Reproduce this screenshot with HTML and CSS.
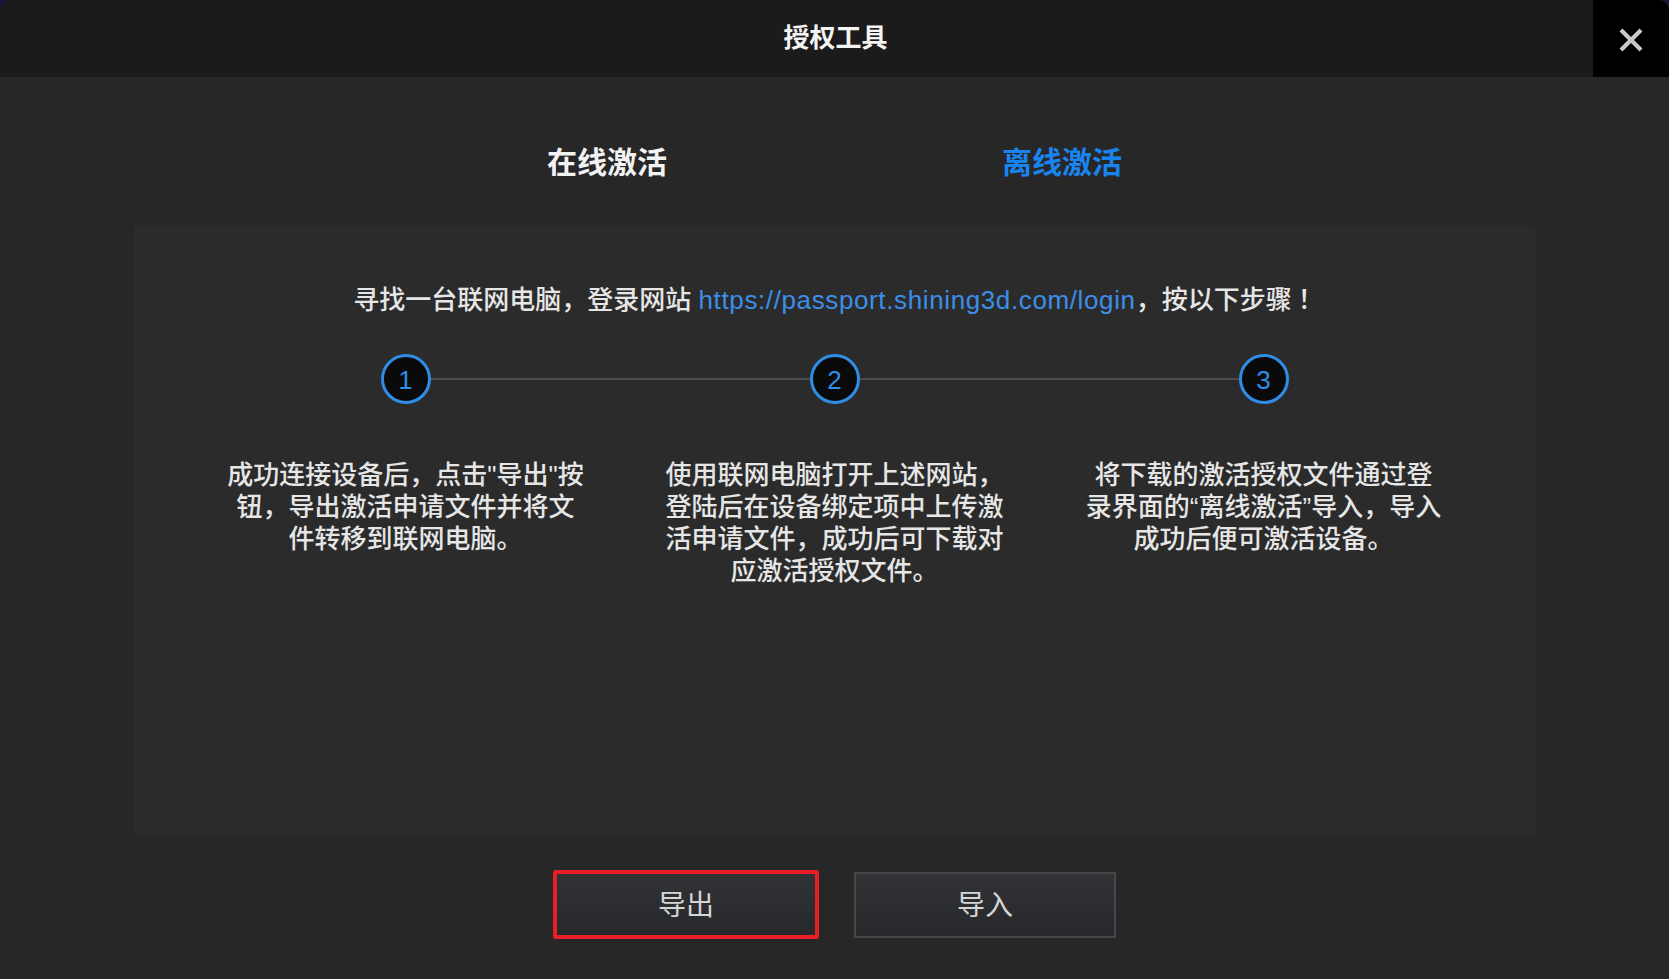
FILE: index.html
```html
<!DOCTYPE html>
<html lang="zh-CN">
<head>
<meta charset="utf-8">
<title>授权工具</title>
<link rel="stylesheet" href="styles.css">
</head>
<body>
<div class="window">
  <header class="titlebar">
    <div class="title">授权工具</div>
    <button class="close" aria-label="关闭">
      <svg width="26" height="26" viewBox="0 0 26 26"><path d="M3 3 L23 23 M23 3 L3 23" stroke="#c9c9c9" stroke-width="4.2" stroke-linecap="butt"/></svg>
    </button>
  </header>
  <main class="body">
    <nav class="tabs">
      <div class="tab">在线激活</div>
      <div class="tab active">离线激活</div>
    </nav>
    <section class="panel">
      <p class="intro">寻找一台联网电脑，登录网站 <a class="link">https://passport.shining3d.com/login</a>，按以下步骤<span class="bang">！</span></p>
      <div class="track">
        <span class="dot">1</span><span class="bar"></span><span class="dot">2</span><span class="bar"></span><span class="dot">3</span>
      </div>
      <div class="steps">
        <p class="step">成功连接设备后，点击"导出"按钮，导出激活申请文件并将文件转移到联网电脑。</p>
        <p class="step">使用联网电脑打开上述网站，登陆后在设备绑定项中上传激活申请文件，成功后可下载对应激活授权文件。</p>
        <p class="step">将下载的激活授权文件通过登录界面的“离线激活”导入，导入成功后便可激活设备。</p>
      </div>
    </section>
    <div class="actions">
      <button class="btn btn-focus">导出</button>
      <button class="btn">导入</button>
    </div>
  </main>
</div>
</body>
</html>
```
FILE: styles.css
```css
* { box-sizing: border-box; }
html, body { margin: 0; padding: 0; }
body {
  width: 1669px;
  height: 979px;
  background: #1d0f3f;
  font-family: "Liberation Sans", "Noto Sans CJK SC", sans-serif;
  overflow: hidden;
}
.window {
  width: 1669px;
  height: 979px;
  background: #272727;
  border-radius: 10px 10px 0 0;
  overflow: hidden;
  display: flex;
  flex-direction: column;
}
.titlebar {
  height: 77px;
  background: #1b1b1b;
  display: flex;
  align-items: center;
  justify-content: center;
  position: relative;
}
.title {
  color: #f4f4f4;
  font-size: 26px;
  font-weight: 700;
  line-height: 1;
  margin-left: 2px;
  margin-bottom: 1px;
}
.close {
  position: absolute;
  right: 0;
  top: 0;
  width: 76px;
  height: 77px;
  background: #000;
  border: 0;
  padding: 0;
  display: flex;
  align-items: center;
  justify-content: center;
  padding-top: 3px;
}
.body {
  flex: 1;
  display: flex;
  flex-direction: column;
  align-items: center;
}
.tabs {
  display: flex;
  margin-top: 64px;
  height: 44px;
}
.tab {
  width: 455px;
  text-align: center;
  font-size: 30px;
  font-weight: 700;
  line-height: 44px;
  color: #f2f2f2;
}
.tab.active { color: #1a84ee; }
.panel {
  margin-top: 41px;
  width: 1401px;
  height: 610px;
  background: #2b2b2b;
  display: flex;
  flex-direction: column;
  align-items: center;
  padding-top: 58px;
}
.intro {
  margin: 0;
  font-size: 26px;
  font-weight: 500;
  line-height: 32px;
  color: #e6e6e6;
  padding-left: 8px;
}
.bang { margin-left: 6px; }
.link {
  font-weight: 400;
  letter-spacing: 0.62px;
  color: #3b8fe9;
  text-decoration: none;
}
.track {
  margin-top: 38px;
  width: 908px;
  display: flex;
  align-items: center;
}
.dot {
  width: 50px;
  height: 50px;
  border-radius: 50%;
  border: 3px solid #2f8de6;
  background: #0a0a0a;
  color: #2f8de6;
  font-size: 26px;
  display: flex;
  align-items: center;
  justify-content: center;
  flex: none;
  padding-top: 2px;
}
.bar {
  flex: 1;
  height: 2px;
  background: #4b4b4b;
}
.steps {
  margin-top: 55px;
  display: grid;
  grid-template-columns: repeat(3, 429px);
}
.step {
  margin: 0 auto;
  width: 362px;
  text-align: center;
  font-size: 26px;
  font-weight: 500;
  line-height: 32px;
  color: #e6e6e6;
}
.actions {
  margin-top: 34px;
  display: flex;
  align-items: center;
  gap: 35px;
}
.btn {
  width: 262px;
  height: 66px;
  border: 2px solid #474747;
  background: linear-gradient(#323336, #27282b);
  color: #d6d6d6;
  font-family: "Noto Sans CJK SC", sans-serif;
  font-size: 28px;
  padding: 0 0 4px;
}
.btn-focus {
  width: 266px;
  height: 69px;
  border: 4px solid #e81f27;
  border-radius: 3px;
}
```
